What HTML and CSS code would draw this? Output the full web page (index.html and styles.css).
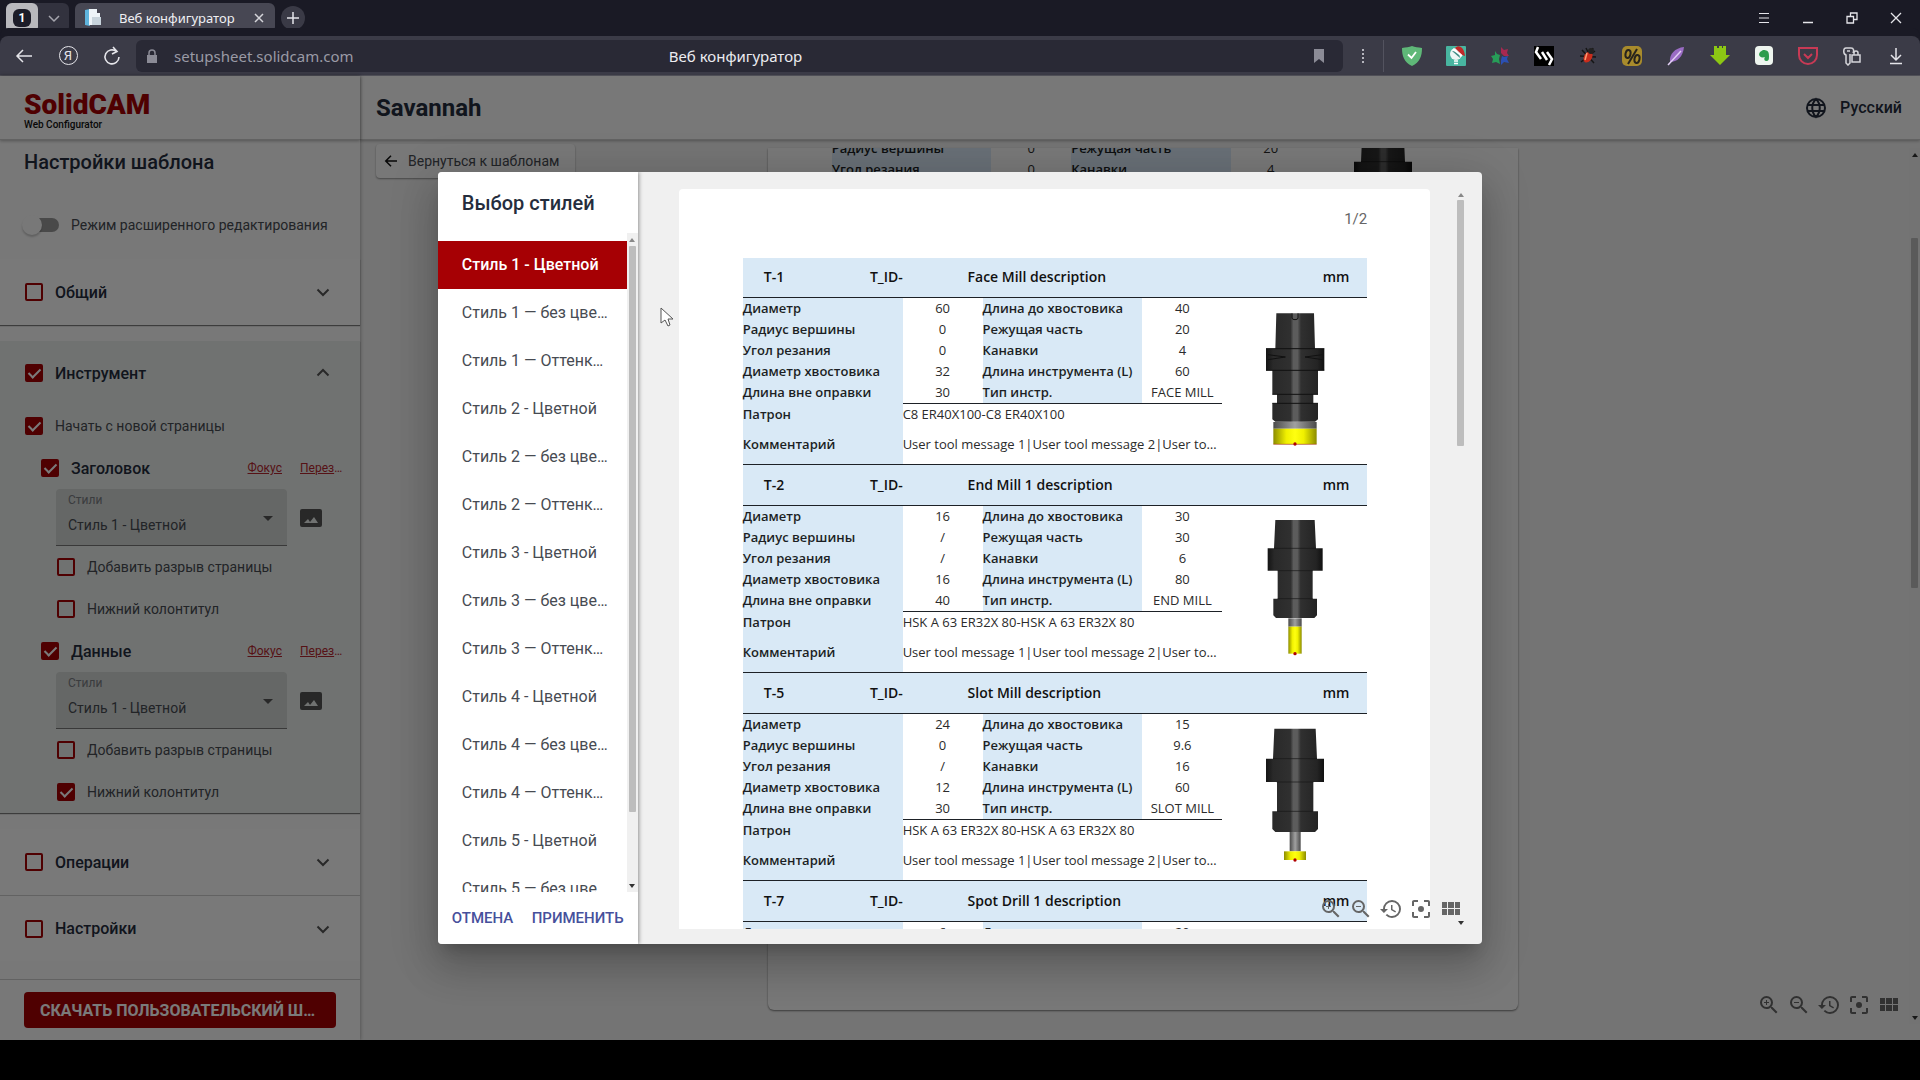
FILE: index.html
```
<!DOCTYPE html>
<html lang="ru">
<head>
    <meta charset="UTF-8">
    <meta name="viewport" content="width=device-width, initial-scale=1.0">
    <title>Веб конфигуратор</title>
    <link rel="stylesheet" href="styles.css">
</head>
<body>
    <svg class="sprite" width="0" height="0" aria-hidden="true">
        <defs>
            <linearGradient id="steel">
                <stop offset="0" stop-color="#141414"/>
                <stop offset=".12" stop-color="#292929"/>
                <stop offset=".42" stop-color="#303030"/>
                <stop offset=".47" stop-color="#5c5c5c"/>
                <stop offset=".54" stop-color="#5c5c5c"/>
                <stop offset=".6" stop-color="#303030"/>
                <stop offset=".88" stop-color="#242424"/>
                <stop offset="1" stop-color="#101010"/>
            </linearGradient>
            <linearGradient id="shank">
                <stop offset="0" stop-color="#4a4a4a"/>
                <stop offset=".5" stop-color="#a0a0a0"/>
                <stop offset="1" stop-color="#4a4a4a"/>
            </linearGradient>
            <linearGradient id="cutter">
                <stop offset="0" stop-color="#8c8c00"/>
                <stop offset=".3" stop-color="#f0f000"/>
                <stop offset=".5" stop-color="#ffff10"/>
                <stop offset=".7" stop-color="#f0f000"/>
                <stop offset="1" stop-color="#8c8c00"/>
            </linearGradient>
        </defs>
        <symbol id="tool-face" viewBox="190 450 190 420">
            <path fill="url(#steel)" d="M229 460h113l3 106h28v65h-19v72h-14v27h14v48l-9 7H226l-9-7v-48h14v-27h-14v-72h-19v-65h28z"/>
            <path fill="none" stroke="#111" stroke-width="3" d="M276 460v14q0 5 9 5t9-5v-14M198 566h175M198 631h175M217 703h137M217 730h137M204 584l52 7-52 8M367 584l-52 7 52 8"/>
            <path fill="url(#shank)" d="M220 786h130v20H220z"/>
            <path fill="url(#cutter)" d="M220 806h130v46H220z"/>
            <path stroke="#a33a00" stroke-width="2" d="M220 853h130"/>
            <circle cx="285" cy="852" r="5" fill="#b00000"/>
        </symbol>
        <symbol id="tool-end" viewBox="130 170 190 420">
            <path fill="url(#steel)" d="M166 176h118l4 85h20v67h-30v84h13v50l-8 8H168l-8-8v-50h13v-84h-30v-67h19z"/>
            <path stroke="#161616" stroke-width="2" d="M162 261h126M173 328h105M173 412h105"/>
            <path fill="url(#shank)" d="M205 471h40v25h-40z"/>
            <path fill="url(#cutter)" d="M205 496h40v81h-40z"/>
            <circle cx="225" cy="577" r="5" fill="#b00000"/>
        </symbol>
        <symbol id="tool-slot" viewBox="130 798 190 420">
            <path fill="url(#steel)" d="M163 806h124l4 90h21v70h-32v88h14v53l-9 9H166l-9-9v-53h14v-88h-33v-70h21z"/>
            <path stroke="#161616" stroke-width="2" d="M159 896h132M170 966h110M171 1054h108"/>
            <path fill="url(#shank)" d="M209 1116h33v58h-33z"/>
            <path fill="url(#cutter)" d="M192 1174h66v26h-66z"/>
            <circle cx="225" cy="1200" r="5" fill="#b00000"/>
        </symbol>
        <symbol id="zoom-in" viewBox="0 0 24 24"><path fill="currentColor" d="M15.5 14h-.79l-.28-.27A6.47 6.47 0 0 0 16 9.5 6.5 6.5 0 1 0 9.5 16c1.61 0 3.09-.59 4.23-1.57l.27.28v.79l5 4.99L20.49 19l-4.99-5zm-6 0C7.01 14 5 11.99 5 9.5S7.01 5 9.5 5 14 7.01 14 9.5 11.99 14 9.5 14zm2.5-4h-2v2H9v-2H7V9h2V7h1v2h2v1z"/></symbol>
        <symbol id="zoom-out" viewBox="0 0 24 24"><path fill="currentColor" d="M15.5 14h-.79l-.28-.27A6.47 6.47 0 0 0 16 9.5 6.5 6.5 0 1 0 9.5 16c1.61 0 3.09-.59 4.23-1.57l.27.28v.79l5 4.99L20.49 19l-4.99-5zm-6 0C7.01 14 5 11.99 5 9.5S7.01 5 9.5 5 14 7.01 14 9.5 11.99 14 9.5 14zM7 9h5v1H7z"/></symbol>
        <symbol id="history" viewBox="0 0 24 24"><path fill="currentColor" d="M13 3a9 9 0 0 0-9 9H1l3.89 3.89.07.14L9 12H6c0-3.87 3.13-7 7-7s7 3.13 7 7-3.13 7-7 7c-1.93 0-3.68-.79-4.94-2.06l-1.42 1.42A8.95 8.95 0 0 0 13 21a9 9 0 0 0 0-18zm-1 5v5l4.28 2.54.72-1.21-3.5-2.08V8H12z"/></symbol>
        <symbol id="focus" viewBox="0 0 24 24"><path fill="currentColor" d="M5 15H3v4c0 1.100.9 2 2 2h4v-2H5v-4zM5 5h4V3H5c-1.100 0-2 .9-2 2v4h2V5zm14-2h-4v2h4v4h2V5c0-1.100-.9-2-2-2zm0 16h-4v2h4c1.100 0 2-.9 2-2v-4h-2v4zM12 9a3 3 0 1 0 0 6 3 3 0 0 0 0-6z"/></symbol>
        <symbol id="grid" viewBox="0 0 24 24"><path fill="currentColor" d="M3 5h5v6H3zM9 5h6v6H9zM16 5h5v6h-5zM3 12h5v6H3zM9 12h6v6H9zM16 12h5v6h-5z"/></symbol>
        <symbol id="chevron" viewBox="0 0 24 24"><path fill="none" stroke="currentColor" stroke-width="2" d="M6.500 9.500l5.500 5.500 5.500-5.500"/></symbol>
        <symbol id="image" viewBox="0 0 24 20"><path fill="currentColor" d="M3 1h18a2 2 0 0 1 2 2v14a2 2 0 0 1-2 2H3a2 2 0 0 1-2-2V3a2 2 0 0 1 2-2zm2 14h14l-4-6-4 5-2-3z"/></symbol>
        <symbol id="arrow-left" viewBox="0 0 24 24"><path fill="none" stroke="currentColor" stroke-width="2" d="M20 12H5M12 5l-7 7 7 7"/></symbol>
    </svg>

    <div class="browser">
        <div class="tab-strip">
            <div class="tab-group">
                <button class="tab-count" aria-label="Вкладки"><span>1</span></button>
                <button class="tab-list" aria-label="Список вкладок">
                    <svg width="14" height="14" viewBox="0 0 14 14"><path fill="none" stroke="#a5a5ad" stroke-width="1.500" d="M2 5l5 5 5-5"/></svg>
                </button>
            </div>
            <div class="tab">
                <svg width="16" height="18" viewBox="0 0 16 18"><path fill="#5fb4dc" d="M0 1l5-1v17l-5-1z"/><path fill="#eef4f8" d="M4 0h8v4h3v12H4z"/><path fill="#c8d4dc" d="M7 8h9v8H7z"/></svg>
                <span>Веб конфигуратор</span>
                <button class="tab-close" aria-label="Закрыть вкладку">
                    <svg width="12" height="12" viewBox="0 0 12 12"><path stroke="#d5d5da" stroke-width="1.500" d="M2 2l8 8M10 2l-8 8"/></svg>
                </button>
            </div>
            <button class="tab-new" aria-label="Новая вкладка">
                <svg width="14" height="14" viewBox="0 0 14 14"><path stroke="#e5e5ea" stroke-width="1.500" d="M7 1v12M1 7h12"/></svg>
            </button>
            <div class="window-controls">
                <button aria-label="Меню"><svg width="12" height="12" viewBox="0 0 12 12"><path stroke="#e5e5ea" d="M1 1.500h10M1 6h10M1 10.500h10"/></svg></button>
                <button aria-label="Свернуть"><svg width="12" height="12" viewBox="0 0 12 12"><path stroke="#e5e5ea" stroke-width="1.500" d="M1 10.500h10"/></svg></button>
                <button aria-label="Восстановить"><svg width="12" height="12" viewBox="0 0 12 12"><path fill="none" stroke="#e5e5ea" stroke-width="1.300" d="M1 4.500h6.500V11H1zM4.500 4.500V1H11v6.500H7.500"/></svg></button>
                <button aria-label="Закрыть"><svg width="12" height="12" viewBox="0 0 12 12"><path stroke="#e5e5ea" stroke-width="1.300" d="M1 1l10 10M11 1L1 11"/></svg></button>
            </div>
        </div>

        <div class="toolbar">
            <button class="tool-button" aria-label="Назад"><svg width="18" height="18" viewBox="0 0 18 18"><path fill="none" stroke="#e5e5ea" stroke-width="1.500" d="M17 9H2M8 3L2 9l6 6"/></svg></button>
            <button class="tool-button" aria-label="Яндекс"><span class="ya">Я</span></button>
            <button class="tool-button" aria-label="Обновить"><svg width="20" height="20" viewBox="0 0 20 20"><path fill="none" stroke="#e5e5ea" stroke-width="1.600" d="M14.500 5.500A7 7 0 1 0 17 11M11 1l4 4.500-5 2.500"/></svg></button>
            <div class="address">
                <div class="address-url">
                    <svg width="12" height="14" viewBox="0 0 12 14"><path fill="#8b8b96" d="M1 6h10v8H1z"/><path fill="none" stroke="#8b8b96" stroke-width="1.500" d="M3 6V4a3 3 0 0 1 6 0v2"/></svg>
                    <span>setupsheet.solidcam.com</span>
                </div>
                <span class="address-title">Веб конфигуратор</span>
                <svg class="bookmark" width="12" height="14" viewBox="0 0 12 14"><path fill="#8b8b96" d="M1 0h10v14L6 10l-5 4z"/></svg>
            </div>
            <button class="dots" aria-label="Ещё"><svg width="4" height="14" viewBox="0 0 4 14"><path fill="#b5b5bd" d="M1 0h2v2H1zM1 4h2v2H1zM1 8h2v2H1zM1 12h2v2H1z"/></svg></button>
            <div class="extensions">
                <button class="tool-button" aria-label="AdGuard"><svg width="20" height="20" viewBox="0 0 20 20"><path fill="#5fb878" d="M10 0c3 1 6 1.500 10 2 0 8-2 14-10 18C2 16 0 10 0 2c4-.5 7-1 10-2z"/><path fill="none" stroke="#fff" stroke-width="1.800" d="M6 8.500l3.500 3.500L14 6"/></svg></button>
                <button class="tool-button" aria-label="Расширение"><svg width="20" height="20" viewBox="0 0 20 20"><rect width="20" height="20" rx="1" fill="#48b5a0"/><circle cx="10" cy="8" r="6" fill="#eef6f4"/><path fill="#3f8e85" d="M6 5l8 7-1-6z"/><path fill="#c02828" d="M9 2c4-4 9-1 10 8l-3-1z"/><path stroke="#fff" stroke-width="2" d="M7 3l9 7"/><path stroke="#fff" stroke-width="1.500" d="M8 15h4M8 17.500h4"/></svg></button>
                <button class="tool-button" aria-label="Расширение"><svg width="20" height="20" viewBox="0 0 20 20"><path fill="#a82850" d="M11 1l3 3 4-1-1 4 2 3h-5l-3-3z"/><path fill="#279d58" d="M5 5l2 3 3 1-1 4 1 5-4-2-4 1 1-4-2-3 4-1z"/><path fill="#2b50b4" d="M12 10l2 1 4-1-1 3 2 4-5-1-3 3v-5z"/></svg></button>
                <button class="tool-button" aria-label="Расширение"><svg width="20" height="20" viewBox="0 0 20 20"><path d="M0 0h20v20H0z"/><path fill="none" stroke="#fff" stroke-width="2.500" d="M4 1L2 6l5 7M8 6l5 8M13 6l5 7-3 6"/></svg></button>
                <button class="tool-button" aria-label="Расширение"><svg width="20" height="20" viewBox="0 0 20 20"><path stroke="#151515" stroke-width="1.500" d="M4 4l12 13M17 5L3 16M2 10l16 1M8 2l2 4M15 2l-2 5"/><ellipse cx="10" cy="11" rx="4" ry="6" fill="#c92d1c" transform="rotate(30 10 11)"/><path stroke="#ff9b71" stroke-width="1.500" d="M9 7l-2 7"/><circle cx="13" cy="5" r="3" fill="#222"/></svg></button>
                <button class="tool-button" aria-label="Расширение"><svg width="20" height="20" viewBox="0 0 20 20"><rect width="20" height="20" rx="5" fill="#a88b2c"/><g fill="none" stroke="#28241c" stroke-width="2"><ellipse cx="6" cy="8" rx="2.500" ry="4" transform="rotate(12 6 8)"/><ellipse cx="15" cy="13" rx="2.500" ry="4" transform="rotate(12 15 13)"/><path d="M15 3L6 18"/></g></svg></button>
                <button class="tool-button" aria-label="Расширение"><svg width="20" height="20" viewBox="0 0 20 20"><path fill="#9a6cc4" d="M18 1C9 2 3 8 4 16c7 0 13-5 14-15z"/><path stroke="#e2cff5" stroke-width="1.500" d="M2 19L15 5"/></svg></button>
                <button class="tool-button" aria-label="Расширение"><svg width="20" height="20" viewBox="0 0 20 20"><path fill="#8cc714" d="M4 0h3v2h2V0h3v2h1V0h3v9h4L10 19 0 9h4z"/></svg></button>
                <button class="tool-button" aria-label="Evernote"><svg width="20" height="20" viewBox="0 0 20 20"><rect x="1" width="18" height="19" rx="4" fill="#eef5ef"/><path fill="#2e9d4c" d="M6 6l3-2c5 0 6 2 6 6 0 3 0 5-3 5-2 0-2-3-1-4-3 1-6 0-6-3z"/></svg></button>
                <button class="tool-button" aria-label="Pocket"><svg width="20" height="20" viewBox="0 0 20 20"><path fill="none" stroke="#c83a55" stroke-width="2" d="M1 2h18v7a9 9 0 0 1-18 0zM6 8l4 4 4-4"/></svg></button>
                <button class="tool-button" aria-label="Пароли"><svg width="20" height="20" viewBox="0 0 20 20"><g fill="none" stroke="#d5d5da" stroke-width="1.500"><path d="M8 8v9l-2 2-2-2V9C1 8 1 2 4 2h5c3 0 3 3 2 5M5 5h3M10 9h8v7h-8zM12 9V7q0-2 2-2t2 2v2"/></g></svg></button>
                <button class="tool-button" aria-label="Загрузки"><svg width="16" height="18" viewBox="0 0 16 18"><path fill="none" stroke="#e5e5ea" stroke-width="1.500" d="M8 1v12M3 8l5 5 5-5M2 16.500h12"/></svg></button>
            </div>
        </div>

        <div class="viewport">
            <div class="app">
                <aside class="sidebar">
                    <div class="brand">
                        <span class="brand-name">SolidCAM</span>
                        <span class="brand-sub">Web Configurator</span>
                    </div>
                    <h2 class="sidebar-title">Настройки шаблона</h2>
                    <label class="switch-row">
                        <input class="switch" type="checkbox">
                        Режим расширенного редактирования
                    </label>

                    <section class="panel panel-raised">
                        <div class="panel-head">
                            <label class="check"><input type="checkbox">Общий</label>
                            <svg class="panel-arrow" width="24" height="24"><use href="#chevron"/></svg>
                        </div>
                    </section>

                    <section class="panel panel-open panel-raised">
                        <div class="panel-head">
                            <label class="check"><input type="checkbox" checked>Инструмент</label>
                            <svg class="panel-arrow open" width="24" height="24"><use href="#chevron"/></svg>
                        </div>
                        <label class="check option"><input type="checkbox" checked>Начать с новой страницы</label>
                        <div class="group">
                            <div class="group-head">
                                <label class="check"><input type="checkbox" checked>Заголовок</label>
                                <a href="#focus-head">Фокус</a>
                                <a class="cut" href="#reload-head">Перезагрузить</a>
                            </div>
                            <div class="style-row">
                                <div class="field">
                                    <label for="head-style">Стили</label>
                                    <select id="head-style"><option>Стиль 1 - Цветной</option></select>
                                </div>
                                <svg width="24" height="20"><use href="#image"/></svg>
                            </div>
                            <label class="check option sub"><input type="checkbox">Добавить разрыв страницы</label>
                            <label class="check option sub"><input type="checkbox">Нижний колонтитул</label>
                        </div>
                        <div class="group">
                            <div class="group-head">
                                <label class="check"><input type="checkbox" checked>Данные</label>
                                <a href="#focus-data">Фокус</a>
                                <a class="cut" href="#reload-data">Перезагрузить</a>
                            </div>
                            <div class="style-row">
                                <div class="field">
                                    <label for="data-style">Стили</label>
                                    <select id="data-style"><option>Стиль 1 - Цветной</option></select>
                                </div>
                                <svg width="24" height="20"><use href="#image"/></svg>
                            </div>
                            <label class="check option sub"><input type="checkbox">Добавить разрыв страницы</label>
                            <label class="check option sub"><input type="checkbox" checked>Нижний колонтитул</label>
                        </div>
                    </section>

                    <section class="panel">
                        <div class="panel-head">
                            <label class="check"><input type="checkbox">Операции</label>
                            <svg class="panel-arrow" width="24" height="24"><use href="#chevron"/></svg>
                        </div>
                        <div class="panel-head">
                            <label class="check"><input type="checkbox">Настройки</label>
                            <svg class="panel-arrow" width="24" height="24"><use href="#chevron"/></svg>
                        </div>
                    </section>

                    <div class="sidebar-footer">
                        <button class="download">Скачать пользовательский шаблон</button>
                    </div>
                </aside>

                <main class="main">
                    <header class="topbar">
                        <h1>Savannah</h1>
                        <button class="language">
                            <svg width="24" height="24" viewBox="0 0 24 24"><path fill="none" stroke="currentColor" stroke-width="2" d="M12 3a9 9 0 1 0 0 18 9 9 0 0 0 0-18zM12 3c-5 5-5 13 0 18 5-5 5-13 0-18zM4 9h16M4 15h16"/></svg>
                            Русский
                        </button>
                    </header>
                    <div class="workspace">
                        <button class="back"><svg width="18" height="18"><use href="#arrow-left"/></svg>Вернуться к шаблонам</button>
                        <div class="sheet-window">
                            <div class="sheet sheet-scrolled" id="sheet-back"></div>
                        </div>
                        <div class="scrollbar main-scroll"><i></i></div>
                        <div class="view-tools">
                            <button aria-label="Увеличить"><svg width="24" height="24"><use href="#zoom-in"/></svg></button>
                            <button aria-label="Уменьшить"><svg width="24" height="24"><use href="#zoom-out"/></svg></button>
                            <button aria-label="Сбросить масштаб"><svg width="24" height="24"><use href="#history"/></svg></button>
                            <button aria-label="По центру"><svg width="24" height="24"><use href="#focus"/></svg></button>
                            <button aria-label="Сетка"><svg width="24" height="24"><use href="#grid"/></svg></button>
                        </div>
                    </div>
                </main>
            </div>

            <div class="backdrop">
                <div class="dialog" role="dialog" aria-labelledby="dialog-title">
                    <div class="style-picker">
                        <h2 id="dialog-title">Выбор стилей</h2>
                        <div class="style-scroll">
                            <ul class="style-list" id="style-list"></ul>
                            <div class="scrollbar list-scroll"><i></i></div>
                        </div>
                        <div class="dialog-actions">
                            <button>Отмена</button>
                            <button>Применить</button>
                        </div>
                    </div>
                    <div class="preview">
                        <div class="sheet">
                            <div class="sheet-number">1/2</div>
                            <div id="sheet-front"></div>
                        </div>
                        <div class="scrollbar preview-scroll"><i></i></div>
                        <div class="view-tools">
                            <button aria-label="Увеличить"><svg width="24" height="24"><use href="#zoom-in"/></svg></button>
                            <button aria-label="Уменьшить"><svg width="24" height="24"><use href="#zoom-out"/></svg></button>
                            <button aria-label="Сбросить масштаб"><svg width="24" height="24"><use href="#history"/></svg></button>
                            <button aria-label="По центру"><svg width="24" height="24"><use href="#focus"/></svg></button>
                            <button aria-label="Сетка"><svg width="24" height="24"><use href="#grid"/></svg></button>
                        </div>
                        <svg class="cursor" width="14" height="20" viewBox="0 0 14 20"><path fill="#fff" stroke="#555" d="M1 1v15l4-3 3 6 2-1-2-6h5z"/></svg>
                    </div>
                </div>
            </div>
        </div>
    </div>
    <script src="script.js"></script>
</body>
</html>
```
FILE: styles.css
```
:root {
    --red: #a60004;
    --ink: #252d3d;
    --text: #474b52;
    --chrome-dark: #1a1a25;
    --chrome: #3b3b47;
    --cell: #d9e9f6;
    --line: #1d2126;
}

* {
    box-sizing: border-box;
}

body {
    margin: 0;
    background: #000;
    color: var(--text);
    font-family: Roboto, "Liberation Sans", sans-serif;
    font-size: 14px;
}

h1, h2, ul {
    margin: 0;
    padding: 0;
}

button {
    display: flex;
    align-items: center;
    justify-content: center;
    padding: 0;
    border: 0;
    background: none;
    color: inherit;
    font: inherit;
    cursor: pointer;
}

.sprite {
    position: absolute;
}

.browser {
    display: flex;
    flex-direction: column;
    height: 100vh;
    padding-bottom: 40px;
    overflow: hidden;
}

/* browser chrome */
.tab-strip {
    display: flex;
    align-items: center;
    height: 36px;
    flex: none;
    padding: 0 2px 0 6px;
    background: var(--chrome-dark);
}

.tab-group {
    display: flex;
    height: 30px;
    border-radius: 6px;
    background: #32323e;
}

.tab-count {
    width: 32px;
    border-radius: 6px;
    background: #b9b9bd;
}

.tab-count span {
    width: 18px;
    height: 18px;
    border-radius: 6px;
    background: #1c1c28;
    color: #fff;
    font-size: 12px;
    font-weight: 700;
    line-height: 18px;
}

.tab-list {
    width: 31px;
}

.tab {
    display: flex;
    align-items: center;
    width: 200px;
    height: 30px;
    margin: 0 6px;
    padding: 0 10px;
    border-radius: 6px;
    background: #474753;
    color: #f0f0f3;
    font-family: "Noto Sans", sans-serif;
    font-size: 13px;
}

.tab span {
    flex: 1;
    padding-left: 18px;
    white-space: nowrap;
}

.tab-new {
    width: 24px;
    height: 24px;
    border-radius: 50%;
    background: #3a3a46;
}

.window-controls {
    display: flex;
    margin-left: auto;
}

.window-controls button {
    width: 44px;
    height: 36px;
}

.toolbar {
    display: flex;
    align-items: center;
    height: 40px;
    flex: none;
    padding: 0 2px;
    border-bottom: 1px solid #54545c;
    border-radius: 8px 8px 0 0;
    background: var(--chrome);
    box-shadow: 0 -8px 0 var(--chrome-dark);
}

.tool-button {
    width: 44px;
    height: 32px;
}

.ya {
    width: 19px;
    height: 19px;
    border: 1px solid #e5e5ea;
    border-radius: 50%;
    color: #e5e5ea;
    font-size: 13px;
    line-height: 17px;
}

.address {
    display: grid;
    grid-template-columns: 1fr auto 1fr;
    align-items: center;
    flex: 1;
    height: 32px;
    margin-left: 2px;
    padding: 0 18px 0 10px;
    border-radius: 6px;
    background: #292935;
    color: #ececf0;
    font-family: "Noto Sans", sans-serif;
    font-size: 15px;
}

.address-url {
    display: flex;
    align-items: center;
    gap: 16px;
    color: #9a9aa5;
}

.bookmark {
    justify-self: end;
}

.dots {
    width: 40px;
    height: 20px;
}

.extensions {
    display: flex;
    padding-left: 6px;
    border-left: 1px solid #53535f;
}

/* application */
.viewport {
    position: relative;
    flex: 1;
    min-height: 0;
}

.app {
    display: flex;
    height: 100%;
    background: #f3f3f3;
}

.sidebar {
    display: flex;
    flex-direction: column;
    width: 360px;
    flex: none;
    background: #fafafa;
    box-shadow: 0 0 4px rgba(0, 0, 0, 0.4);
    z-index: 1;
}

.brand {
    display: flex;
    flex-direction: column;
    justify-content: center;
    height: 64px;
    flex: none;
    padding: 6px 24px 0;
    border-bottom: 1px solid #ccc;
    box-shadow: 0 1px 3px rgba(0, 0, 0, 0.3);
}

.brand-name {
    color: var(--red);
    font-size: 28px;
    font-weight: 900;
    line-height: 28px;
}

.brand-sub {
    color: #111;
    font-size: 10px;
    font-weight: 500;
    line-height: 12px;
}

.sidebar-title {
    padding: 0 24px;
    color: var(--ink);
    font-size: 20px;
    font-weight: 500;
    line-height: 44px;
}

.switch-row {
    display: flex;
    align-items: center;
    gap: 12px;
    height: 75px;
    flex: none;
    padding: 6px 24px 0;
    white-space: nowrap;
}

.switch {
    appearance: none;
    flex: none;
    width: 35px;
    height: 14px;
    margin: 0;
    border-radius: 7px;
    background: linear-gradient(90deg, transparent 10px, #9a9a9a 10px);
}

.switch::before {
    content: "";
    display: block;
    width: 20px;
    height: 20px;
    margin: -3px 0 0 -2px;
    border-radius: 50%;
    background: #fafafa;
    box-shadow: 0 2px 2px rgba(0, 0, 0, 0.2);
}

.panel {
    margin-bottom: 16px;
    background: #fdfdfd;
}

.panel-raised {
    box-shadow: 0 1px 1px rgba(0, 0, 0, 0.5);
}

.panel-open {
    background: #ebefed;
}

.panel-head {
    display: flex;
    align-items: center;
    justify-content: space-between;
    height: 66px;
    padding: 0 25px;
}

.panel-open .panel-head {
    height: 64px;
}

.panel-head + .panel-head {
    border-top: 1px solid #ccc;
}

.panel-head .check,
.group-head .check {
    color: var(--ink);
    font-size: 16px;
    font-weight: 500;
}

.panel-arrow {
    color: #555;
}

.panel-arrow.open {
    transform: rotate(180deg);
}

.check {
    display: flex;
    align-items: center;
    gap: 12px;
}

.check input {
    appearance: none;
    display: flex;
    justify-content: center;
    width: 18px;
    height: 18px;
    margin: 0;
    border: 2px solid var(--red);
    border-radius: 2px;
}

.check input:checked {
    background: var(--red);
}

.check input:checked::after {
    content: "";
    width: 5px;
    height: 10px;
    border: solid #fff;
    border-width: 0 2px 2px 0;
    transform: rotate(45deg);
}

.option {
    height: 42px;
    padding-left: 25px;
}

.sub {
    padding-left: 57px;
}

.group-head {
    display: flex;
    align-items: center;
    height: 42px;
    padding: 0 14px 0 41px;
}

.group-head .check {
    flex: 1;
}

.group-head a {
    margin-left: 18px;
    color: #b3262e;
    font-size: 12px;
}

.group-head .cut {
    width: 46px;
    overflow: hidden;
    text-overflow: ellipsis;
    white-space: nowrap;
}

.style-row {
    display: flex;
    align-items: center;
    gap: 12px;
    padding: 0 37px 0 56px;
    color: #555;
}

.field {
    display: flex;
    flex-direction: column;
    flex: 1;
    height: 57px;
    padding: 4px 12px 0;
    border-bottom: 1px solid #777;
    border-radius: 4px 4px 0 0;
    background: #d3d7d5;
}

.field label {
    color: #7a7d82;
    font-size: 12px;
    line-height: 15px;
}

.field select {
    appearance: none;
    height: 34px;
    padding: 0;
    border: 0;
    background: url("data:image/svg+xml,%3Csvg xmlns='http://www.w3.org/2000/svg' width='10' height='5'%3E%3Cpath fill='%23555' d='M0 0h10L5 5z'/%3E%3C/svg%3E") no-repeat right 2px top 8px;
    color: var(--text);
    font: inherit;
}

.sidebar-footer {
    margin-top: auto;
    padding: 12px 24px;
    border-top: 1px solid #ccc;
}

.download {
    display: block;
    width: 100%;
    height: 36px;
    padding: 0 16px;
    overflow: hidden;
    border-radius: 4px;
    background: var(--red);
    color: #fff;
    font-size: 16px;
    font-weight: 700;
    text-align: left;
    text-overflow: ellipsis;
    text-transform: uppercase;
    white-space: nowrap;
}

.main {
    display: flex;
    flex-direction: column;
    flex: 1;
    min-width: 0;
}

.topbar {
    display: flex;
    align-items: center;
    justify-content: space-between;
    height: 64px;
    padding: 0 18px 0 16px;
    border-bottom: 1px solid #ccc;
    background: #fafafa;
    box-shadow: 0 1px 3px rgba(0, 0, 0, 0.3);
    color: var(--ink);
}

.topbar h1 {
    font-size: 24px;
    font-weight: 700;
}

.language {
    gap: 12px;
    font-size: 16px;
    font-weight: 500;
}

.workspace {
    position: relative;
    display: flex;
    flex: 1;
    min-height: 0;
    justify-content: center;
    padding: 8px 0 30px 6px;
}

.back {
    position: absolute;
    left: 16px;
    top: 4px;
    gap: 8px;
    height: 34px;
    padding: 0 16px 0 6px;
    border-radius: 4px;
    background: #fafafa;
    box-shadow: 0 1px 2px rgba(0, 0, 0, 0.4);
}

.back svg {
    color: #111;
}

.sheet-window {
    display: flex;
    width: 48.3%;
    overflow: hidden;
    border-radius: 0 0 6px 6px;
    background: #fafafa;
    box-shadow: 0 1px 2px rgba(0, 0, 0, 0.5);
}

.scrollbar {
    display: flex;
    flex-direction: column;
    flex: none;
    align-items: center;
    justify-content: space-between;
    width: 11px;
    background: #f0f0f0;
}

.scrollbar::before,
.scrollbar::after {
    content: "";
    border: 3px solid transparent;
    border-top-width: 0;
    border-bottom: 4px solid #888;
    margin: 5px 0 4px;
}

.scrollbar::after {
    border-top: 4px solid #333;
    border-bottom-width: 0;
    margin-top: auto;
}

.scrollbar i {
    width: 7px;
    border-radius: 1px;
    background: #bdbdbd;
}

.main-scroll {
    position: absolute;
    top: 8px;
    right: 0;
    bottom: 16px;
}

.main-scroll::before {
    border-bottom-color: #333;
}

.main-scroll i {
    height: 40%;
    margin-top: 77px;
}

.view-tools {
    position: absolute;
    right: 19px;
    bottom: 23px;
    display: flex;
    gap: 6px;
    color: #666;
}

/* dialog */
.backdrop {
    position: absolute;
    inset: 0;
    display: flex;
    align-items: center;
    justify-content: center;
    background: rgba(0, 0, 0, 0.52);
    z-index: 2;
}

.dialog {
    display: flex;
    width: 54.4%;
    height: 80%;
    overflow: hidden;
    border-radius: 4px;
    background: #f0f0f0;
    box-shadow: 0 11px 15px -7px rgba(0, 0, 0, 0.2), 0 24px 38px 3px rgba(0, 0, 0, 0.14), 0 9px 46px 8px rgba(0, 0, 0, 0.12);
}

.style-picker {
    display: flex;
    flex-direction: column;
    width: 200px;
    flex: none;
    background: #fff;
    box-shadow: 1px 0 4px rgba(0, 0, 0, 0.4);
}

.style-picker h2 {
    height: 61px;
    padding-left: 24px;
    color: var(--ink);
    font-size: 20px;
    font-weight: 500;
    line-height: 62px;
}

.style-scroll {
    display: flex;
    flex: 1;
    min-height: 0;
}

.style-list {
    flex: 1;
    min-width: 0;
    padding-top: 8px;
    overflow: hidden;
    list-style: none;
}

.style-list button {
    display: block;
    width: 100%;
    height: 48px;
    padding: 0 16px 2px 24px;
    overflow: hidden;
    font-size: 16px;
    text-align: left;
    text-overflow: ellipsis;
    white-space: nowrap;
}

.style-list .active {
    background: var(--red);
    color: #fff;
    font-weight: 500;
}

.list-scroll i {
    height: 86%;
}

.dialog-actions {
    display: flex;
    justify-content: space-between;
    height: 52px;
    padding: 0 14px;
    color: #46509c;
    font-size: 15px;
    font-weight: 500;
}

.dialog-actions button {
    text-transform: uppercase;
}

.preview {
    position: relative;
    display: flex;
    flex: 1;
    gap: 27px;
    min-width: 0;
    padding: 17px 18px 15px 41px;
}

.preview .sheet {
    flex: 1;
    overflow: hidden;
    border-radius: 4px 4px 0 0;
    background: #fff;
}

.preview-scroll {
    width: 7px;
    background: none;
}

.preview-scroll::before {
    margin-top: 4px;
    margin-bottom: 3px;
}

.preview-scroll i {
    height: 246px;
}

.cursor {
    position: absolute;
    left: 22px;
    top: 135px;
}

/* setup sheet */
.sheet {
    width: 100%;
    padding: 0 63px 0 64px;
    color: #2b2b2b;
    font-family: "Open Sans", "Noto Sans", sans-serif;
    font-size: 13px;
}

.sheet-scrolled {
    margin-top: -71px;
}

.sheet-number {
    padding: 20px 0 29px;
    color: #666;
    font-family: Roboto, sans-serif;
    font-size: 15px;
    line-height: 20px;
    text-align: right;
}

.tool-head {
    display: grid;
    grid-template-columns: 10% 26% 54% 10%;
    align-items: center;
    height: 41px;
    padding-bottom: 2px;
    border-bottom: 1px solid var(--line);
    background: var(--cell);
    color: #111;
    font-size: 14px;
    font-weight: 600;
    text-align: center;
}

.tool-head:first-child {
    height: 40px;
}

.tool-head span:nth-child(3) {
    text-align: left;
}

.tool-table {
    width: 100%;
    border-bottom: 1px solid var(--line);
    border-spacing: 0;
    table-layout: fixed;
}

.tool-table th,
.tool-table td {
    height: 21px;
    padding: 0 0 2px;
    line-height: 18px;
    text-align: center;
    white-space: nowrap;
}

.tool-table th {
    background: var(--cell);
    color: #1c1f24;
    font-weight: 600;
    text-align: left;
}

.tool-table .wide {
    overflow: hidden;
    text-align: left;
    text-overflow: ellipsis;
}

.tool-table .holder .wide {
    height: 23px;
    border-top: 1px solid var(--line);
}

.tool-table .comment .wide {
    height: 38px;
}

.tool-table .picture {
    padding-top: 12px;
    vertical-align: top;
}

.tool-table svg {
    display: block;
    margin: 0 auto;
}

.col-label {
    width: 25.6%;
}

.col-value {
    width: 12.8%;
}
```
FILE: script.js
```
const labels = [
    ['Диаметр', 'Длина до хвостовика'],
    ['Радиус вершины', 'Режущая часть'],
    ['Угол резания', 'Канавки'],
    ['Диаметр хвостовика', 'Длина инструмента (L)'],
    ['Длина вне оправки', 'Тип инстр.']
];
const message = 'User tool message 1|User tool message 2|User tool message 3';
const hsk = 'HSK A 63 ER32X 80-HSK A 63 ER32X 80';

const tools = [
    { id: 'T-1', name: 'Face Mill description', left: [60, 0, 0, 32, 30], right: [40, 20, 4, 60, 'FACE MILL'], holder: 'C8 ER40X100-C8 ER40X100', icon: 'tool-face' },
    { id: 'T-2', name: 'End Mill 1 description', left: [16, '/', '/', 16, 40], right: [30, 30, 6, 80, 'END MILL'], holder: hsk, icon: 'tool-end' },
    { id: 'T-5', name: 'Slot Mill description', left: [24, 0, '/', 12, 30], right: [15, 9.6, 16, 60, 'SLOT MILL'], holder: hsk, icon: 'tool-slot' },
    { id: 'T-7', name: 'Spot Drill 1 description', left: [6, 0, 90, 6, 30], right: [20, 20, 2, 60, 'SPOT DRILL'], holder: hsk, icon: 'tool-end' }
];

function renderTool(tool) {
    const rows = labels.map((pair, i) => `
        <tr>
            <th>${pair[0]}</th><td>${tool.left[i]}</td>
            <th>${pair[1]}</th><td>${tool.right[i]}</td>
            ${i === 0 ? `<td class="picture" rowspan="7"><svg width="64" height="140"><use href="#${tool.icon}"/></svg></td>` : ''}
        </tr>`).join('');

    return `
        <div class="tool-head"><span>${tool.id}</span><span>T_ID-</span><span>${tool.name}</span><span>mm</span></div>
        <table class="tool-table">
            <colgroup><col class="col-label"><col class="col-value"><col class="col-label"><col class="col-value"><col></colgroup>
            ${rows}
            <tr class="holder"><th>Патрон</th><td class="wide" colspan="3">${tool.holder}</td></tr>
            <tr class="comment"><th>Комментарий</th><td class="wide" colspan="3">${message}</td></tr>
        </table>`;
}

document.getElementById('sheet-front').innerHTML = tools.map(renderTool).join('');
document.getElementById('sheet-back').innerHTML = renderTool({ ...tools[0], left: [10, 0, 0, 10, 30], icon: 'tool-slot' });

let items = '';
for (let n = 1; n <= 5; n++) {
    ['- Цветной', '— без цветного фона', '— Оттенки серого'].forEach((kind, i) => {
        const active = n === 1 && i === 0 ? ' class="active"' : '';
        items += `<li><button${active}>Стиль ${n} ${kind}</button></li>`;
    });
}
document.getElementById('style-list').innerHTML = items;
```
